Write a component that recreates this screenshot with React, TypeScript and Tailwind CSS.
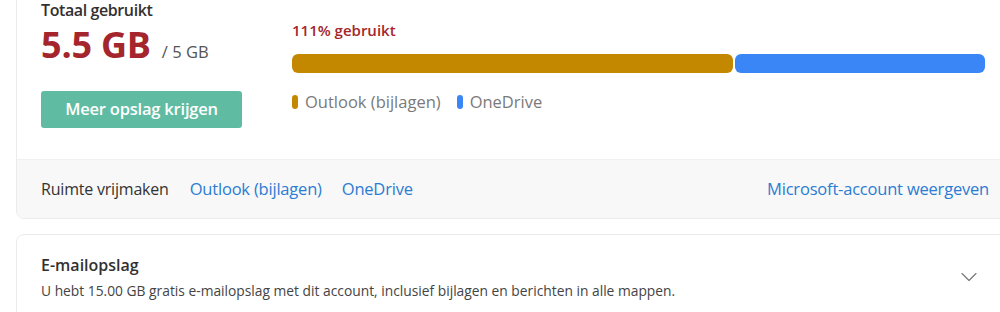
import React from 'react';
import { ChevronDown } from 'lucide-react';

const font = { fontFamily: '"Open Sans", "Noto Sans", sans-serif' };

export default function App() {
  return (
    <div className="w-[1000px] h-[312px] overflow-hidden bg-white text-[#323130]" style={font}>
      <div className="pl-4 -mt-6">
        {/* Usage card */}
        <div className="w-[998px] border border-[#ebebeb] rounded-lg overflow-hidden">
          <div className="flex pl-6 pt-6 h-[182px]">
            <div className="w-[251px] shrink-0">
              <p className="text-[16px] font-semibold leading-5 -mt-[1px] tracking-[-0.4px]">Totaal gebruikt</p>
              <div className="flex items-baseline mt-[5px]">
                <span className="text-[36px] font-bold leading-[40px] text-[#a4262c] tracking-[-0.2px]">5.5 GB</span>
                <span className="ml-[11px] text-[16.5px] text-[#555]">/ 5 GB</span>
              </div>
              <button className="mt-[26px] w-[201px] h-[37px] rounded-[3px] bg-[#5fbca3] text-white text-[16.5px] font-semibold tracking-[-0.2px]">
                Meer opslag krijgen
              </button>
            </div>
            <div className="w-[693px] shrink-0">
              <p className="text-[15px] font-semibold text-[#a4262c] leading-5 mt-[19px]">111% gebruikt</p>
              <div className="flex gap-[2px] h-[19px] mt-[14px]">
                <div className="w-[441px] bg-[#c38800] rounded-[6px]" />
                <div className="flex-1 bg-[#3b86f6] rounded-[6px]" />
              </div>
              <div className="flex items-center mt-[19px] text-[16.5px] leading-5 text-[#7a7a7a]">
                <span className="w-[6px] h-[14px] rounded-full bg-[#c38800] mr-[7px]" />
                <span>Outlook (bijlagen)</span>
                <span className="w-[6px] h-[14px] rounded-full bg-[#3b86f6] ml-[16px] mr-[7px]" />
                <span>OneDrive</span>
              </div>
            </div>
          </div>
          <div className="h-[59px] bg-[#f8f8f8] border-t border-[#f0f0f0] flex items-center pl-6 pr-6 text-[16.5px] tracking-[-0.2px]">
            <span className="text-[#333] text-[16px]">Ruimte vrijmaken</span>
            <a className="ml-[21px] text-[#2b7cd3]">Outlook (bijlagen)</a>
            <a className="ml-[20px] text-[#2b7cd3]">OneDrive</a>
            <a className="ml-auto text-[#2b7cd3]">Microsoft-account weergeven</a>
          </div>
        </div>

        {/* Email storage card */}
        <div className="mt-[15px] w-[998px] h-[100px] border border-[#ebebeb] rounded-lg flex pl-6 pr-[30px] pt-[20px]">
          <div className="flex-1">
            <p className="text-[16px] font-semibold leading-5">E-mailopslag</p>
            <p className="text-[13.8px] text-[#444] leading-5 mt-[6px]">
              U hebt 15.00 GB gratis e-mailopslag met dit account, inclusief bijlagen en berichten in alle mappen.
            </p>
          </div>
          <ChevronDown className="w-[28px] h-[28px] mt-[8px] text-[#777]" strokeWidth={1} />
        </div>
      </div>
    </div>
  );
}
